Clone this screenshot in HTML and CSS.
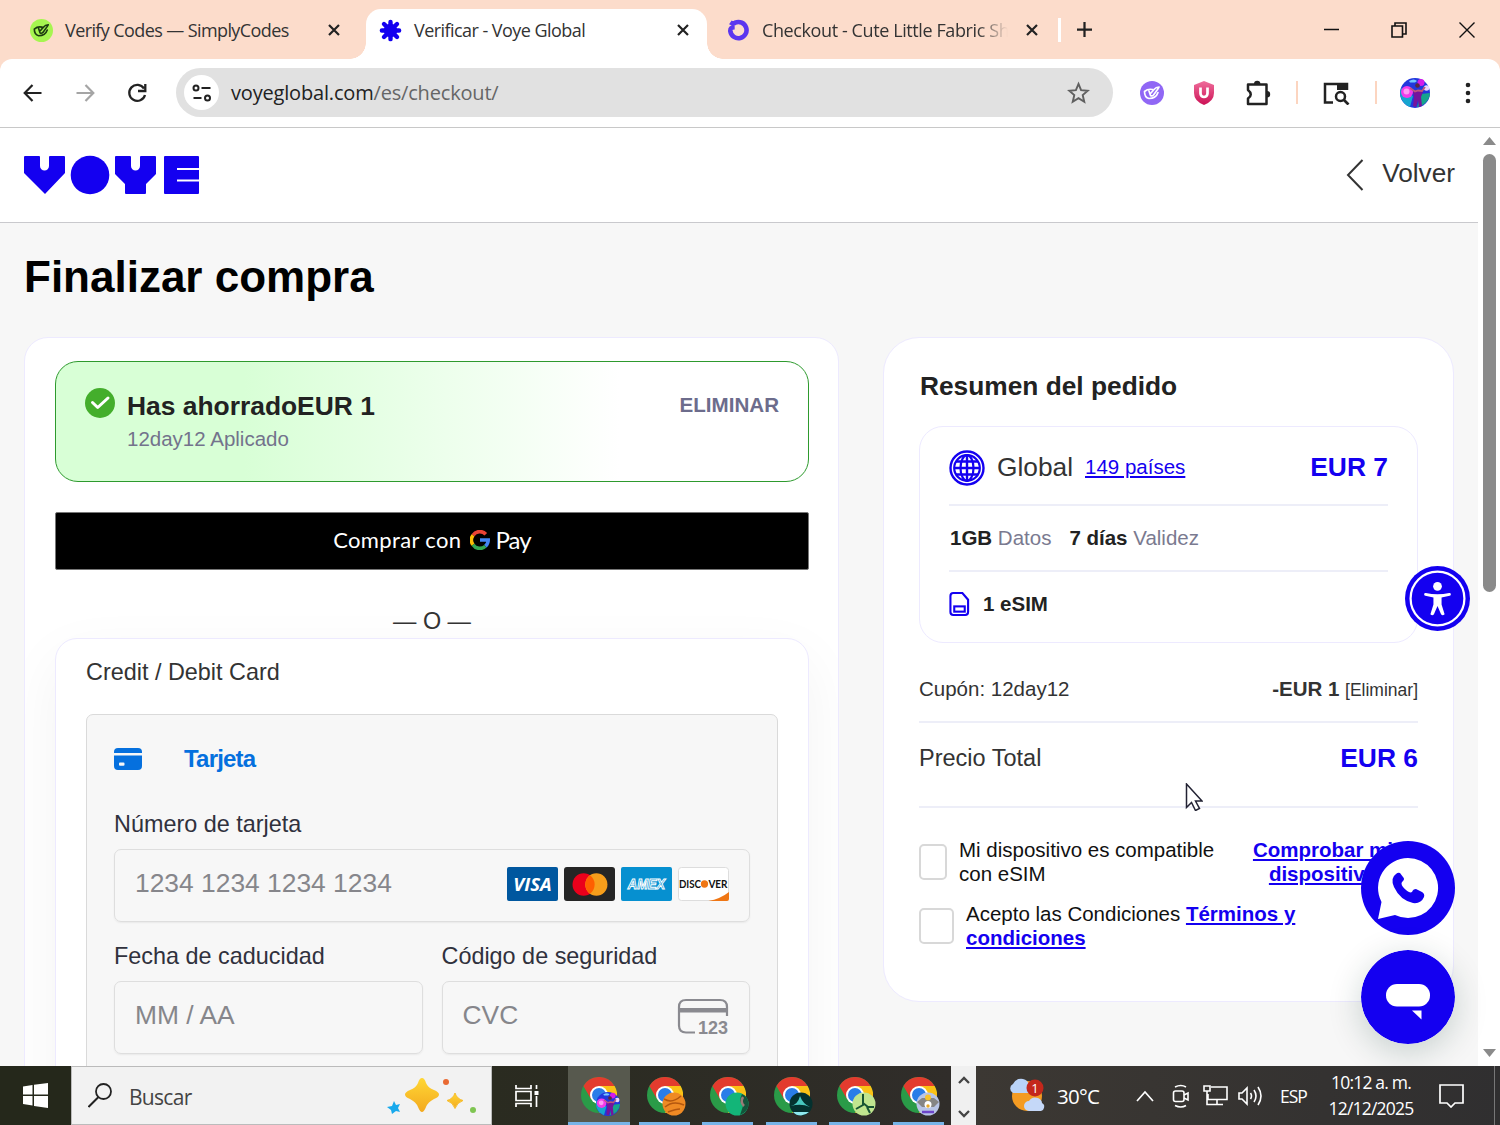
FILE: index.html
```html
<!DOCTYPE html>
<html lang="es">

<head>
    <meta charset="UTF-8">
    <meta name="viewport" content="width=device-width, initial-scale=1.0">
    <title>Verificar - Voye Global</title>
    <link rel="stylesheet" href="styles.css">
</head>

<body>

    <!-- Shared symbols -->
    <svg class="defs" width="0" height="0">
        <symbol id="close" viewBox="0 0 12 12">
            <path d="M1 1l10 10M11 1L1 11" fill="none" stroke="#222" stroke-width="2.2"/>
        </symbol>
        <symbol id="chrome" viewBox="0 0 36 36">
            <circle cx="18" cy="18" r="18" fill="#2a9b48"/>
            <path d="M18 9h15.6A18 18 0 0 1 18 36l8-13z" fill="#fbc116"/>
            <path d="M2.400 9A18 18 0 0 1 33.600 9H18l-8 13z" fill="#e33b2e"/>
            <circle cx="18" cy="18" r="9" fill="#fff"/>
            <circle cx="18" cy="18" r="7" fill="#2a7de8"/>
        </symbol>
        <symbol id="avatar" viewBox="0 0 30 30">
            <circle cx="15" cy="15" r="15" fill="#2237dd"/>
            <path d="M1 10a15 15 0 0 0 9 19l3-11z" fill="#16a6cf"/>
            <path d="M17 29a15 15 0 0 0 13-14l-9 1z" fill="#16a58c"/>
            <circle cx="7" cy="14" r="6" fill="#f43bea"/>
            <circle cx="6.500" cy="13.500" r="3" fill="#ff9af5"/>
            <circle cx="21" cy="4.500" r="3.500" fill="#d51bea"/>
            <circle cx="26.500" cy="10" r="2.800" fill="#e8d5ff"/>
            <path d="M9 3q5-3 8 0l-2 1.500h-5z" fill="#74c8ff"/>
            <path d="M13 14l3-2h4l3 2-2 5 1 9-3 1-1-7-2 7-3-1 1-9z" fill="#75149c"/>
            <circle cx="17.500" cy="7.500" r="2.300" fill="#5a2840"/>
            <path d="M10 10l5 3.500 3-1 4 .5 3-4" stroke="#c0587a" stroke-width="1.800" fill="none"/>
        </symbol>
        <symbol id="pick" viewBox="0 0 24 24">
            <path d="M12.500 8.500Q8 7.500 4.500 10.500q0 6 4.500 7 7 0 9-6M9 10l1.500 4.500q1.500 1 3-.5l4-5.500 1.500-2.500q-3 0-5 2.500l-3 3.500" fill="none" stroke="currentColor" stroke-width="1.700" stroke-linecap="round" stroke-linejoin="round"/>
        </symbol>
    </svg>

    <div class="tabs">
        <div class="tab tab-first">
            <svg class="favicon lime" viewBox="0 0 24 24"><circle cx="12" cy="12" r="12" fill="#a6f550"/><use href="#pick"/></svg>
            <span class="tab-title simply">Verify Codes — SimplyCodes</span>
            <svg class="tab-close"><use href="#close"/></svg>
        </div>
        <div class="tab tab-active">
            <svg class="favicon" viewBox="-12 -12 24 24">
                <circle r="7" fill="#1400f0"/>
                <g stroke="#1400f0" stroke-width="4.600" stroke-linecap="round">
                    <path d="M0-9V9M-9 0H9M-6.800-6.800L6.800 6.800M6.800-6.800L-6.800 6.800"/>
                </g>
            </svg>
            <span class="tab-title voye">Verificar - Voye Global</span>
            <svg class="tab-close"><use href="#close"/></svg>
        </div>
        <div class="tab tab-last">
            <svg class="favicon" viewBox="0 0 24 24"><path d="M3.500 3.500q3 2 5 .3a8.500 8.500 0 1 1-5 9.200q-.5-4.500 4.500-4.500" fill="none" stroke="#5b36ef" stroke-width="4.800"/></svg>
            <span class="tab-title fabric">Checkout - Cute Little Fabric Sh</span>
            <svg class="tab-close"><use href="#close"/></svg>
        </div>
        <span class="tab-sep"></span>
        <svg class="plus" viewBox="0 0 16 16"><path d="M8 0v16M0 8h16" stroke="#222" stroke-width="2.400"/></svg>
        <div class="window-btns">
            <svg width="16" height="16" viewBox="0 0 16 16"><path d="M1 7.500h15" stroke="#111" stroke-width="1.500"/></svg>
            <svg width="16" height="16" viewBox="0 0 16 16"><path d="M1 4h10.500v11H1zM4 4V1h11v11h-3.500" fill="none" stroke="#111" stroke-width="1.600"/></svg>
            <svg width="16" height="16" viewBox="0 0 16 16"><path d="M.5.500l15 15M15.500.500l-15 15" stroke="#111" stroke-width="1.400"/></svg>
        </div>
    </div>

    <div class="toolbar">
        <svg class="nav" viewBox="0 0 24 24"><path d="M20.500 12H4M11.500 4L3.700 12l7.800 8" fill="none" stroke="#222" stroke-width="2.200"/></svg>
        <svg class="nav" viewBox="0 0 24 24"><path d="M3.500 12H20M12.500 4l7.800 8-7.800 8" fill="none" stroke="#a5a5a5" stroke-width="2.200"/></svg>
        <svg class="nav" viewBox="0 0 24 24"><path d="M19 7.500A8 8 0 1 0 20 14M20.300 3v7H13" fill="none" stroke="#222" stroke-width="2.300"/></svg>
        <div class="address">
            <span class="site-info">
                <svg width="20" height="18" viewBox="0 0 20 18"><g fill="none" stroke="#222" stroke-width="2"><circle cx="4" cy="4" r="2.500"/><path d="M9.500 4h9M1.500 14h8"/><circle cx="15.500" cy="14" r="2.500"/></g></svg>
            </span>
            <span class="url">voyeglobal.com<span class="path">/es/checkout/</span></span>
            <svg class="star" viewBox="0 0 24 24"><path d="M12 2.500l2.700 6.500 7 .6-5.300 4.600 1.600 6.900-6-3.700-6 3.700 1.600-6.900L2.300 9.600l7-.6z" fill="none" stroke="#606060" stroke-width="2"/></svg>
        </div>
        <div class="extensions">
            <svg class="ext violet" viewBox="0 0 24 24"><circle cx="12" cy="12" r="12" fill="#9067f5"/><use href="#pick"/></svg>
            <svg class="ext" viewBox="0 0 24 24"><defs><linearGradient id="shield" x2="0" y2="1"><stop stop-color="#ef6d9b"/><stop offset="1" stop-color="#cc1155"/></linearGradient></defs><path d="M12 0l10 4v8q0 8-10 12Q2 20 2 12V4z" fill="url(#shield)"/><path d="M8.500 6.500v6a3.500 3.500 0 0 0 7 0v-6" fill="none" stroke="#fff" stroke-width="2.700"/></svg>
            <svg class="ext puzzle" viewBox="0 0 26 26"><path d="M3 4.500h18.500V24H3v-5.500q5.500-4 0-8.500z" fill="none" stroke="#222" stroke-width="2.500" stroke-linejoin="round"/><path d="M9 4a3.200 3.200 0 0 1 6.400 0zM22 11a3.200 3.200 0 0 1 0 6.400z" fill="#222"/></svg>
            <span class="bar-sep"></span>
            <svg class="ext lens" viewBox="0 0 28 24"><path d="M11 21.500H3V3h22v6" fill="none" stroke="#222" stroke-width="2.500"/><path d="M15 2h11v7H15z" fill="#222"/><circle cx="18.500" cy="15.500" r="4.500" fill="none" stroke="#222" stroke-width="2.500"/><path d="M21.500 18.500l5 5" stroke="#222" stroke-width="2.700"/></svg>
            <span class="bar-sep"></span>
            <svg class="ext profile"><use href="#avatar"/></svg>
            <svg class="ext menu" viewBox="0 0 6 22"><g fill="#222"><circle cx="3" cy="3" r="2.300"/><circle cx="3" cy="11" r="2.300"/><circle cx="3" cy="19" r="2.300"/></g></svg>
        </div>
    </div>

    <div class="viewport">
        <div class="page">
            <div class="header">
                <svg width="176" height="40" viewBox="0 0 176 40" fill="#1400f0">
                    <path d="M1 1h14q1 0 1 1v9a4.500 4.500 0 0 0 9 0V2q0-1 1-1h14q1 0 1 1v16L21 39 0 18V2q0-1 1-1z"/>
                    <circle cx="66" cy="20" r="19.300"/>
                    <path d="M92 1h14q1 0 1 1v9a4.500 4.500 0 0 0 9 0V2q0-1 1-1h14q1 0 1 1v17l-10 10v9q0 1-1 1h-19q-1 0-1-1v-9L91 19V2q0-1 1-1z"/>
                    <path d="M141 1h33q1 0 1 1v11h-22v2h22v9.500h-22v2h22V38q0 1-1 1h-33q-1 0-1-1V2q0-1 1-1z"/>
                </svg>
                <a class="back">
                    <svg width="18" height="32" viewBox="0 0 18 32"><path d="M16.500 1L2 16l14.500 15" fill="none" stroke="#333" stroke-width="2"/></svg>
                    <span>Volver</span>
                </a>
            </div>

            <h1>Finalizar compra</h1>

            <div class="columns">
                <div class="payment">
                    <div class="coupon">
                        <svg width="30" height="30" viewBox="0 0 30 30"><circle cx="15" cy="15" r="15" fill="#44ae2c"/><path d="M7.500 14.500l5.200 5L23 10" fill="none" stroke="#fff" stroke-width="3" stroke-linecap="round" stroke-linejoin="round"/></svg>
                        <div class="coupon-text">
                            <div class="saved">Has ahorradoEUR 1</div>
                            <div class="applied">12day12 Aplicado</div>
                        </div>
                        <a class="remove">ELIMINAR</a>
                    </div>

                    <button class="gpay">
                        <span class="buy">Comprar con</span>
                        <svg width="20" height="20" viewBox="0 0 20 20" fill="none" stroke-width="3.600">
                            <path d="M3 5.200A8.200 8.200 0 0 1 15.800 4.200" stroke="#ea4335"/>
                            <path d="M3 14.800A8.200 8.200 0 0 1 3 5.200" stroke="#fbbc04"/>
                            <path d="M15.400 16.200A8.200 8.200 0 0 1 3 14.800" stroke="#34a853"/>
                            <path d="M10 10h8.200a8.200 8.200 0 0 1-2.800 6.200" stroke="#4285f4"/>
                        </svg>
                        <span class="pay">Pay</span>
                    </button>

                    <div class="or">— O —</div>

                    <div class="card-box">
                        <div class="card-title">Credit / Debit Card</div>
                        <div class="card-form">
                            <div class="method">
                                <svg width="28" height="22" viewBox="0 0 28 22" fill="#0570de"><path d="M0 4q0-4 4-4h20q4 0 4 4v1H0z"/><path fill-rule="evenodd" d="M0 7.500h28V18q0 4-4 4H4q-4 0-4-4zM6 14.500q-1 0-1 1v1.200q0 1 1 1h3.500q1 0 1-1v-1.200q0-1-1-1z"/></svg>
                                <span>Tarjeta</span>
                            </div>
                            <label>Número de tarjeta</label>
                            <div class="field">
                                <span>1234 1234 1234 1234</span>
                                <div class="brands">
                                    <svg width="51" height="34" viewBox="0 0 52 34" preserveAspectRatio="none"><rect width="52" height="34" rx="2" fill="#00579f"/><text x="26" y="24" class="visa" text-anchor="middle" textLength="39" lengthAdjust="spacingAndGlyphs">VISA</text></svg>
                                    <svg width="51" height="34" viewBox="0 0 52 34" preserveAspectRatio="none"><rect width="52" height="34" rx="3" fill="#252525"/><circle cx="20" cy="17.500" r="11.300" fill="#eb001b"/><circle cx="33" cy="17.500" r="11.300" fill="#f79e1b"/><path d="M26.500 8.300a11.300 11.300 0 0 1 0 18.400 11.300 11.300 0 0 1 0-18.400z" fill="#ff5f00"/></svg>
                                    <svg width="51" height="34" viewBox="0 0 52 34" preserveAspectRatio="none"><rect width="52" height="34" rx="2" fill="#0690d0"/><text x="26" y="22" class="amex" text-anchor="middle" textLength="38" lengthAdjust="spacingAndGlyphs">AMEX</text></svg>
                                    <svg width="51" height="34" viewBox="0 0 52 34" preserveAspectRatio="none"><rect x=".5" y=".5" width="51" height="33" rx="3" fill="#fff" stroke="#ddd"/><path d="M31 34q12-2 21-9v7q0 2-2 2z" fill="#ef7614"/><text x="1" y="21" class="disc" textLength="22.500" lengthAdjust="spacingAndGlyphs">DISC</text><circle cx="27" cy="17" r="3.700" fill="#ef7614"/><text x="31" y="21" class="disc" textLength="19.500" lengthAdjust="spacingAndGlyphs">VER</text></svg>
                                </div>
                            </div>
                            <div class="row">
                                <div>
                                    <label>Fecha de caducidad</label>
                                    <div class="field"><span>MM / AA</span></div>
                                </div>
                                <div>
                                    <label>Código de seguridad</label>
                                    <div class="field">
                                        <span>CVC</span>
                                        <svg width="52" height="38" viewBox="0 0 52 38"><path d="M18 35.500H9q-7 0-7-7V10q0-7 7-7h34q7 0 7 7v9" fill="none" stroke="#8a8a90" stroke-width="2.200"/><path d="M2 11h48v4.500H2z" fill="#8a8a90"/><text x="21" y="37" class="cvc" textLength="30" lengthAdjust="spacingAndGlyphs">123</text></svg>
                                    </div>
                                </div>
                            </div>
                        </div>
                    </div>
                </div>

                <div class="summary">
                    <h2>Resumen del pedido</h2>
                    <div class="plan">
                        <div class="plan-row plan-head">
                            <svg width="36" height="36" viewBox="0 0 36 36" fill="none" stroke="#1400f0"><circle cx="18" cy="18" r="16.500" stroke-width="2.400"/><circle cx="18" cy="18" r="12.800" stroke-width="2.200"/><ellipse cx="18" cy="18" rx="6.500" ry="12.800" stroke-width="2.200"/><path d="M18 5v26M5 18h26M7 11.500h22M7 24.500h22" stroke-width="2.400"/></svg>
                            <span class="plan-name">Global</span>
                            <a class="countries">149 países</a>
                            <span class="price">EUR 7</span>
                        </div>
                        <div class="plan-row plan-info">
                            <span><b>1GB</b> Datos</span>
                            <span><b>7 días</b> Validez</span>
                        </div>
                        <div class="plan-row plan-sim">
                            <svg width="21" height="26" viewBox="0 0 22 26" fill="none" stroke="#1400f0" stroke-width="2.200"><path d="M4.500 1.500h9.500l6 7v13q0 3-3 3H4.500q-3 0-3-3v-17q0-3 3-3z"/><rect x="5.500" y="15.500" width="11" height="5.500"/></svg>
                            <b>1 eSIM</b>
                        </div>
                    </div>
                    <div class="line coupon-line">
                        <span>Cupón: 12day12</span>
                        <span><b>-EUR 1</b> <small>[Eliminar]</small></span>
                    </div>
                    <div class="line total-line">
                        <span>Precio Total</span>
                        <span class="price">EUR 6</span>
                    </div>
                    <div class="check">
                        <span class="box box-narrow"></span>
                        <p class="compat">Mi dispositivo es compatible con eSIM</p>
                        <a class="verify">Comprobar mi dispositivo</a>
                    </div>
                    <div class="check check-terms">
                        <span class="box"></span>
                        <p class="terms">Acepto las Condiciones <a>Términos y condiciones</a></p>
                    </div>
                </div>
            </div>
        </div>

        <div class="scrollbar">
            <svg width="13" height="8" viewBox="0 0 13 8"><path d="M6.500 0L13 8H0z" fill="#8a8a8a"/></svg>
            <div class="thumb"></div>
            <svg width="13" height="8" viewBox="0 0 13 8"><path d="M6.500 8L13 0H0z" fill="#8a8a8a"/></svg>
        </div>

        <!-- Floating buttons -->
        <svg class="float access" viewBox="0 0 64 64"><circle cx="32" cy="32" r="32" fill="#1400f0"/><circle cx="32" cy="32" r="26.500" fill="none" stroke="#fff" stroke-width="2.200"/><g fill="#fff"><circle cx="32" cy="20" r="4.300"/><path d="M20.500 26.500q11.500 2.500 23 0a1.400 1.400 0 0 1 .5 2.800L36 31v7l3 9.500q-2 2-3.500 0L32 39.500l-3.500 8q-1.500 2-3.500 0l3-9.500v-7l-8-1.700a1.400 1.400 0 0 1 .5-2.800z"/></g></svg>
        <svg class="float whatsapp" viewBox="0 0 94 94"><circle cx="47" cy="47" r="47" fill="#1400f0"/><path d="M47 17a30 30 0 1 1-13 57l-17 4 3.500-17A30 30 0 0 1 47 17z" fill="#fff"/><path d="M35 33q-6 4-2 13 6 13 19 16 8 1 11-6 1-3-2-5l-6-3q-3 0-4 3-3 2-9-5-3-4 0-6 2-2 0-4l-3-4q-2-1-4 1z" fill="#1400f0"/></svg>
        <svg class="float chat" viewBox="0 0 94 94"><circle cx="47" cy="47" r="47" fill="#1400f0"/><rect x="25" y="34" width="44" height="22.500" rx="11" fill="#fff"/><path d="M51 60.500h9.500v9z" fill="#fff"/></svg>
        <svg class="float cursor" viewBox="0 0 18 28"><path d="M1.500 1v23.500l5-5 4 8 4-2-4-7.500h6.500z" fill="#fff" stroke="#223" stroke-width="1.500"/></svg>
    </div>

    <div class="taskbar">
        <div class="start">
            <svg width="25" height="25" viewBox="0 0 25 25" fill="#fff"><path d="M0 3.500l9.500-1.500v9.500H0zM11 1.700L25 0v11.500H11zM0 13h9.500v9.500L0 21zM11 13h14v12l-14-2z"/></svg>
        </div>
        <div class="search">
            <svg width="24" height="25" viewBox="0 0 24 25"><circle cx="15.500" cy="8.500" r="7.500" fill="none" stroke="#222" stroke-width="1.800"/><path d="M10.500 14L.5 24" stroke="#222" stroke-width="2"/></svg>
            <span>Buscar</span>
            <svg class="sparkles" width="90" height="36" viewBox="0 0 90 36">
                <defs><linearGradient id="gold" x2="0" y2="1"><stop stop-color="#ffd735"/><stop offset="1" stop-color="#f3a91f"/></linearGradient></defs>
                <path d="M35 0q2.500 0 4 5 2 5 8 7 5 2 5 4.500T47 21q-6 3-8 8-2 5-4 5t-4-5q-2-5-8-8-5-2-5-4.500t5-4.500q6-2 8-7 1.500-5 4-5z" fill="url(#gold)"/>
                <path d="M68 15q2 6 8 7.500-6 2-8 8-2-6-8-8 6-1.500 8-7.500z" fill="url(#gold)" stroke="#f8bd2b"/>
                <path d="M7 23l2 4 4-1-2 4 2 4-4-1-4 3-1-4-4-3 5-1z" fill="#18a9ec"/>
                <circle cx="59" cy="4" r="3" fill="#e96a33"/><circle cx="86" cy="32" r="3" fill="#7fc552"/>
            </svg>
        </div>
        <div class="apps">
            <div class="task-view">
                <svg width="25" height="24" viewBox="0 0 25 24" fill="none" stroke="#fff" stroke-width="1.700"><path d="M1 1v3.500h15V1M1 7.500h15v9H1zM1 23v-3.500h15V23M21.500 1v4M21.500 12v11"/><path d="M19.500 7h4v4h-4z" fill="#fff" stroke="none"/></svg>
            </div>
            <div class="app app-active">
                <svg viewBox="0 0 40 40"><use href="#chrome" width="36" height="36"/><use href="#avatar" x="15" y="15" width="24" height="24"/></svg>
            </div>
            <div class="app">
                <svg viewBox="0 0 40 40"><use href="#chrome" width="36" height="36"/><circle cx="27" cy="27" r="11.500" fill="#ef8a24"/><path d="M17 22q8 5 17-3M18 30q8-7 19-2M21 35q8-3 12-3" stroke="#b4570f" stroke-width="1.500" fill="none"/></svg>
            </div>
            <div class="app">
                <svg viewBox="0 0 40 40"><use href="#chrome" width="36" height="36"/><circle cx="27" cy="27" r="11.500" fill="#13b578"/><path d="M32 17q-4 7 1 12l-3 9q8-3 8.500-11Q38 19 32 17z" fill="#14543b"/><path d="M33 20q-3 5 1 9" stroke="#9b7b78" stroke-width="2.500" fill="none"/></svg>
            </div>
            <div class="app">
                <svg viewBox="0 0 40 40"><use href="#chrome" width="36" height="36"/><circle cx="27" cy="27" r="11.500" fill="#04312f"/><path d="M17 29q7-2 9-10 3 8 10 11-9-4-19-1z" fill="#48c8c0"/><path d="M19 35h16q-3 3-8 3.500-5 0-8-3.500z" fill="#8fe9ef"/></svg>
            </div>
            <div class="app">
                <svg viewBox="0 0 40 40"><use href="#chrome" width="36" height="36"/><circle cx="27" cy="27" r="11.500" fill="#c0e58f"/><path d="M26 17v11l-7 4M26 26l5 4h6M30 30l3 6" stroke="#175434" stroke-width="2" fill="none"/></svg>
            </div>
            <div class="app">
                <svg viewBox="0 0 40 40"><use href="#chrome" width="36" height="36"/><circle cx="27" cy="27" r="11.500" fill="#b8c4e6"/><path d="M16 25l5-4h12l5 4-5 5H21z" fill="#858585"/><circle cx="27" cy="20.500" r="3" fill="#f5c32b"/><circle cx="27" cy="27.500" r="3.500" fill="#fff"/><circle cx="27" cy="29" r="1.700" fill="#e5a82b"/><path d="M21 35h12" stroke="#6c45c8" stroke-width="2.500"/></svg>
            </div>
        </div>
        <div class="spinner">
            <svg width="12" height="8" viewBox="0 0 12 8"><path d="M1 7l5-5 5 5" fill="none" stroke="#444" stroke-width="2.300"/></svg>
            <svg width="12" height="8" viewBox="0 0 12 8"><path d="M1 1l5 5 5-5" fill="none" stroke="#444" stroke-width="2.300"/></svg>
        </div>
        <div class="tray">
            <svg class="weather" width="38" height="36" viewBox="0 0 38 36"><circle cx="19" cy="18" r="15" fill="#f49b22"/><path d="M5 15a5 5 0 0 1 0-9Q8 0 15 1q5 1 6 6 4 0 4 4t-4 4z" fill="#b9d3f7"/><path d="M21 33a5 5 0 0 1 0-10q3-5 9-3 4 2 4 5 4 2 1 7l-2 1z" fill="#c5d8f8"/><circle cx="27" cy="10" r="8.500" fill="#c4271b"/><text x="27" y="15" text-anchor="middle" class="count">1</text></svg>
            <span class="temp">30°C</span>
            <svg class="chevron" width="18" height="12" viewBox="0 0 18 12"><path d="M1 11l8-9 8 9" fill="none" stroke="#fff" stroke-width="1.700"/></svg>
            <svg class="meet" width="18" height="24" viewBox="0 0 18 24" fill="none" stroke="#fff" stroke-width="1.600"><rect x="1.500" y="7" width="10.500" height="10.500" rx="2"/><path d="M12 11l4-2v7l-4-2M3 3q6-3 11 0M3 21.500q6 3 11 0"/></svg>
            <svg class="network" width="25" height="21" viewBox="0 0 25 21" fill="none" stroke="#fff" stroke-width="1.600"><path d="M8 2h16v12.500H5V9M14 15v4M9 19.500h11M1 1h6v5H1zM4 6v13.500h5"/></svg>
            <svg class="volume" width="26" height="20" viewBox="0 0 26 20" fill="none" stroke="#fff" stroke-width="1.600"><path d="M1 7h3l5-5v16l-5-5H1zM12.500 7q2 3 0 6M16 4q4 6 0 12M20 1q6 9 0 18"/></svg>
            <span class="lang">ESP</span>
            <div class="clock">
                <div>10:12 a. m.</div>
                <div class="date">12/12/2025</div>
            </div>
            <svg class="notes" width="25" height="24" viewBox="0 0 25 24"><path d="M1 1h23v18h-8l-4 4-4-4H1z" fill="none" stroke="#fff" stroke-width="1.700"/></svg>
            <span class="desktop-edge"></span>
        </div>
    </div>

</body>

</html>
```
FILE: styles.css
```css
* {
    box-sizing: border-box;
}

body {
    margin: 0;
    width: 1500px;
    height: 1125px;
    overflow: hidden;
    display: flex;
    flex-direction: column;
    background-color: #fcdccb;
    font-family: "Liberation Sans", Arial, sans-serif;
    color: #333;
}

svg {
    flex: none;
    display: block;
}

.defs {
    position: absolute;
}

/* Tab strip */
.tabs {
    height: 59px;
    flex: none;
    display: flex;
    align-items: center;
    font-family: "Open Sans", "Noto Sans", sans-serif;
    font-size: 18px;
    color: #333;
}

.tab {
    height: 50px;
    margin-top: 9px;
    padding-bottom: 8px;
    display: flex;
    align-items: center;
}

.tab-first {
    width: 366px;
    padding-left: 30px;
}

.tab-active {
    position: relative;
    width: 341px;
    padding-left: 13px;
    background-color: #fff;
    border-radius: 15px 15px 0 0;
}

    /* curved feet of the active tab */
    .tab-active::before,
    .tab-active::after {
        content: "";
        position: absolute;
        bottom: 0;
        width: 16px;
        height: 16px;
    }

    .tab-active::before {
        left: -16px;
        background: radial-gradient(circle at 0 0, transparent 15.5px, #fff 16px);
    }

    .tab-active::after {
        right: -16px;
        background: radial-gradient(circle at 100% 0, transparent 15.5px, #fff 16px);
    }

.tab-last {
    width: 341px;
    padding-left: 20px;
}

.favicon {
    width: 23px;
    height: 23px;
    margin-right: 12px;
}

.lime {
    color: #1d3a10;
}

.tab-title {
    white-space: nowrap;
}

.simply {
    width: 263px;
    letter-spacing: -0.6px;
}

.voye {
    width: 263px;
    letter-spacing: -0.55px;
}

.fabric {
    width: 246px;
    margin-right: 18px;
    letter-spacing: -0.4px;
    -webkit-mask-image: linear-gradient(to right, #000 215px, transparent 246px);
    mask-image: linear-gradient(to right, #000 215px, transparent 246px);
}

.tab-close {
    width: 12px;
    height: 12px;
}

.tab-sep {
    width: 3px;
    height: 24px;
    margin-left: 10px;
    background-color: #fff;
}

.plus {
    width: 15px;
    height: 15px;
    margin-left: 16px;
}

.window-btns {
    margin-left: auto;
    padding-right: 25px;
    display: flex;
    gap: 52px;
}

/* Toolbar */
.toolbar {
    height: 69px;
    flex: none;
    display: flex;
    align-items: center;
    padding: 0 0 1px 7px;
    background-color: #fff;
    border-bottom: 1px solid #c8c8c8;
    border-radius: 12px 12px 0 0;
}

.nav {
    width: 52px;
    height: 24px;
}

.address {
    width: 937px;
    height: 49px;
    margin-left: 13px;
    padding: 0 23px 0 8px;
    display: flex;
    align-items: center;
    background-color: #e1e1e1;
    border-radius: 25px;
}

.site-info {
    width: 35px;
    height: 35px;
    display: flex;
    align-items: center;
    justify-content: center;
    border-radius: 50%;
    background-color: #fff;
}

.url {
    flex: 1;
    padding-left: 12px;
    font-family: "Open Sans", "Noto Sans", sans-serif;
    font-size: 20px;
    letter-spacing: -0.18px;
    color: #222;
}

.path {
    color: #666;
}

.star {
    width: 23px;
    height: 24px;
}

.extensions {
    display: grid;
    grid-template-columns: 52px 52px 56px 22px 56px 24px 54px 52px;
    align-items: center;
    justify-items: center;
    margin-left: 13px;
}

.ext {
    width: 24px;
    height: 24px;
}

.violet {
    color: #fff;
}

.puzzle {
    width: 26px;
    height: 26px;
}

.lens {
    width: 28px;
}

.profile {
    width: 30px;
    height: 30px;
}

.menu {
    width: 6px;
    height: 22px;
}

.bar-sep {
    width: 2px;
    height: 23px;
    background-color: #fcd5c0;
}

/* Page */
.viewport {
    position: relative;
    height: 938px;
    flex: none;
    display: flex;
    overflow: hidden;
    background-color: #fff;
}

.page {
    width: 1478px;
    background-color: #f7f7f7;
}

.header {
    height: 95px;
    display: flex;
    align-items: center;
    justify-content: space-between;
    padding: 0 23px 1px 24px;
    background-color: #fff;
    border-bottom: 1px solid #c9c9cd;
}

.back {
    display: flex;
    align-items: center;
    gap: 18px;
    font-size: 26.2px;
    line-height: 30px;
}

    .back span {
        padding-bottom: 4px;
    }

h1 {
    margin: 0;
    padding: 28px 0 34px 24px;
    font-size: 44px;
    line-height: 52px;
    color: #000;
}

.columns {
    display: flex;
    align-items: flex-start;
    gap: 44px;
    padding-left: 24px;
}

.payment {
    width: 815px;
    height: 900px;
    padding: 23px 29px 0 30px;
    background-color: #fff;
    border: 1px solid #edeaff;
    border-radius: 24px;
    overflow: hidden;
}

.coupon {
    height: 121px;
    display: flex;
    padding: 26px 29px 0;
    border: 1.5px solid #2e9a2e;
    border-radius: 23px;
    background: linear-gradient(to right, #d8ffd6 25%, #fff 75%);
}

.coupon-text {
    flex: 1;
    padding-left: 12px;
}

.saved {
    padding-top: 3px;
    font-size: 26.4px;
    line-height: 30px;
    font-weight: bold;
    color: #222;
}

.applied {
    padding-top: 6px;
    font-size: 20.5px;
    line-height: 24px;
    color: #73738c;
}

.remove {
    padding-top: 5px;
    font-size: 20.6px;
    line-height: 24px;
    font-weight: bold;
    color: #6c6c8c;
}

.gpay {
    width: 100%;
    height: 58px;
    margin: 30px 0 0;
    padding: 0 0 3px;
    display: flex;
    align-items: center;
    justify-content: center;
    background-color: #000;
    border: 1px solid #777;
    border-radius: 2px;
    color: #fff;
    font-family: Lato, sans-serif;
}

.buy {
    margin-right: 9px;
    font-size: 22px;
    letter-spacing: 0.35px;
}

.pay {
    margin-left: 5px;
    font-size: 24px;
    letter-spacing: -0.9px;
}

.or {
    padding-top: 38px;
    text-align: center;
    font-size: 23.4px;
    line-height: 26px;
}

.card-box {
    height: 500px;
    margin-top: 4px;
    padding: 19px 30px 0;
    background-color: #fff;
    border: 1px solid #edeaff;
    border-radius: 22px;
    box-shadow: 0 20px 60px rgba(0, 0, 0, 0.05);
}

.card-title {
    font-size: 23.4px;
    line-height: 28px;
}

.card-form {
    height: 450px;
    margin-top: 28px;
    padding: 29px 27px 0;
    background-color: #f7f7f7;
    border: 1px solid #dadada;
    border-radius: 7px;
    color: #30313d;
}

.method {
    display: flex;
    align-items: center;
    gap: 42px;
    margin-bottom: 36px;
    color: #0570de;
    font-size: 24px;
    line-height: 30px;
    font-weight: bold;
    letter-spacing: -0.8px;
}

label {
    display: block;
    font-size: 23.4px;
    line-height: 28px;
}

.field {
    height: 73px;
    margin-top: 11px;
    padding: 0 20px 4px;
    display: flex;
    align-items: center;
    justify-content: space-between;
    border: 1px solid #dedede;
    border-radius: 7px;
    box-shadow: 0 1px 2px rgba(0, 0, 0, 0.06);
    font-size: 26.4px;
    color: #86868b;
}

.brands {
    display: flex;
    gap: 6px;
}

.visa {
    font: italic bold 18px "Open Sans", sans-serif;
    fill: #fff;
}

.amex {
    font: italic bold 14px "Liberation Sans", sans-serif;
    fill: #0690d0;
    stroke: #fff;
    stroke-width: 1px;
}

.disc {
    font: bold 10.5px Lato, sans-serif;
    fill: #111;
}

.cvc {
    font: bold 17.5px "Liberation Sans", sans-serif;
    fill: #8a8a90;
}

.row {
    display: grid;
    grid-template-columns: 1fr 1fr;
    gap: 19px;
    margin-top: 20px;
}

/* Order summary */
.summary {
    width: 571px;
    height: 665px;
    padding: 33px 35px 0;
    background-color: #fff;
    border: 1px solid #edeaff;
    border-radius: 36px;
}

h2 {
    margin: 0 0 25px;
    padding-left: 1px;
    font-size: 26.3px;
    line-height: 30px;
    color: #222;
}

.plan {
    height: 217px;
    padding: 10px 29px 0;
    border: 1px solid #edeaff;
    border-radius: 24px;
    font-size: 20.5px;
}

.plan-row {
    display: flex;
    align-items: center;
    border-bottom: 2px solid #edeef8;
}

.plan-head {
    height: 69px;
    padding-bottom: 6px;
}

.plan-name {
    padding: 0 12px;
    font-size: 26.3px;
}

.countries {
    padding-bottom: 2px;
    color: #1400f0;
    text-decoration: underline;
}

.price {
    margin-left: auto;
    font-size: 26.4px;
    font-weight: bold;
    color: #1400f0;
}

.plan-info {
    height: 66px;
    gap: 18px;
    padding-left: 1px;
    color: #7a7a90;
}

    .plan-info b {
        color: #222;
    }

.plan-sim {
    height: 63px;
    gap: 13px;
    border: none;
    color: #222;
}

.line {
    display: flex;
    align-items: center;
    justify-content: space-between;
    border-bottom: 2px solid #edeef8;
}

.coupon-line {
    height: 80px;
    padding-top: 14px;
    font-size: 20.5px;
}

    .coupon-line small {
        font-size: 17.5px;
    }

.total-line {
    height: 85px;
    padding-bottom: 12px;
    font-size: 23.5px;
}

.check {
    display: flex;
    align-items: center;
    padding-top: 30px;
    font-size: 20.5px;
    line-height: 23.5px;
    color: #111;
}

    .check a {
        color: #1400f0;
        font-weight: bold;
        text-decoration: underline;
    }

.check-terms {
    padding-top: 17px;
}

.box {
    width: 35px;
    height: 36px;
    flex: none;
    border: 2.5px solid #d8d8d8;
    border-radius: 5px;
}

.box-narrow {
    width: 28px;
}

.compat {
    width: 274px;
    margin: 0 0 0 12px;
}

.terms {
    width: 370px;
    margin: 0 0 0 12px;
}

.verify {
    width: 180px;
    text-align: center;
}

/* Scrollbar */
.scrollbar {
    width: 22px;
    display: flex;
    flex-direction: column;
    align-items: center;
    padding: 9px 0;
}

.thumb {
    width: 13px;
    height: 438px;
    margin: 9px 0 auto;
    border-radius: 7px;
    background-color: #8a8a8a;
}

/* Floating items */
.float {
    position: absolute;
}

.access {
    top: 438px;
    left: 1405px;
    width: 65px;
    height: 65px;
}

.whatsapp {
    top: 713px;
    left: 1361px;
    width: 94px;
    height: 94px;
}

.chat {
    top: 822px;
    left: 1361px;
    width: 94px;
    height: 94px;
    border-radius: 50%;
    box-shadow: 0 8px 34px rgba(0, 50, 40, 0.2);
}

.cursor {
    top: 655px;
    left: 1185px;
    width: 18px;
    height: 28px;
}

/* Taskbar */
.taskbar {
    height: 59px;
    flex: none;
    display: flex;
    background-color: #2b2c22;
    font-family: "Open Sans", "Noto Sans", sans-serif;
    color: #fff;
}

.start {
    width: 71px;
    display: flex;
    align-items: center;
    justify-content: center;
    background-color: #25281b;
}

.search {
    width: 421px;
    display: flex;
    align-items: center;
    padding: 0 14px 0 16px;
    background-color: #f2f2f2;
    border: 1px solid #bbb;
    font-size: 21px;
    letter-spacing: -0.7px;
    color: #444;
}

    .search span {
        padding: 2px 0 0 17px;
    }

.sparkles {
    margin-left: auto;
}

.apps {
    width: 459px;
    display: flex;
    background: linear-gradient(to right, #2a2b20, #302d2a);
}

.task-view {
    width: 76px;
    display: flex;
    align-items: center;
    padding-left: 23px;
}

.app {
    width: 51px;
    margin: 0 6px 0 6.5px;
    padding-top: 11px;
    border-bottom: 3px solid #76b4e8;
}

    .app svg {
        width: 40px;
        height: 40px;
        margin-left: 8px;
    }

.app-active {
    width: 62px;
    margin: 0 2px 0 0;
    background-color: #57594e;
}

    .app-active svg {
        margin-left: 13px;
    }

.spinner {
    width: 25px;
    display: flex;
    flex-direction: column;
    align-items: center;
    justify-content: space-between;
    padding: 10px 0 7px;
    background-color: #f0f0f0;
}

.tray {
    flex: 1;
    display: flex;
    align-items: center;
    padding-left: 32px;
    background: linear-gradient(to right, #3c3833, #302f30);
}

.temp {
    width: 44px;
    margin-left: 11px;
    font-size: 20.5px;
    letter-spacing: -0.7px;
    white-space: nowrap;
}

.count {
    font: 13px "Open Sans", sans-serif;
    fill: #fff;
}

.chevron {
    margin-left: 35px;
}

.meet {
    margin-left: 18px;
}

.network {
    margin-left: 13px;
}

.volume {
    margin-left: 10px;
}

.lang {
    width: 28px;
    margin-left: 16px;
    font-size: 17.5px;
    letter-spacing: -1px;
}

.clock {
    width: 86px;
    margin-left: 20px;
    padding-bottom: 1px;
    text-align: center;
    font-size: 17.5px;
    line-height: 26px;
    letter-spacing: -0.8px;
    white-space: nowrap;
}

.notes {
    margin-left: 25px;
}

.desktop-edge {
    width: 1px;
    height: 59px;
    margin: 0 5px 0 auto;
    background-color: #777;
}
```
